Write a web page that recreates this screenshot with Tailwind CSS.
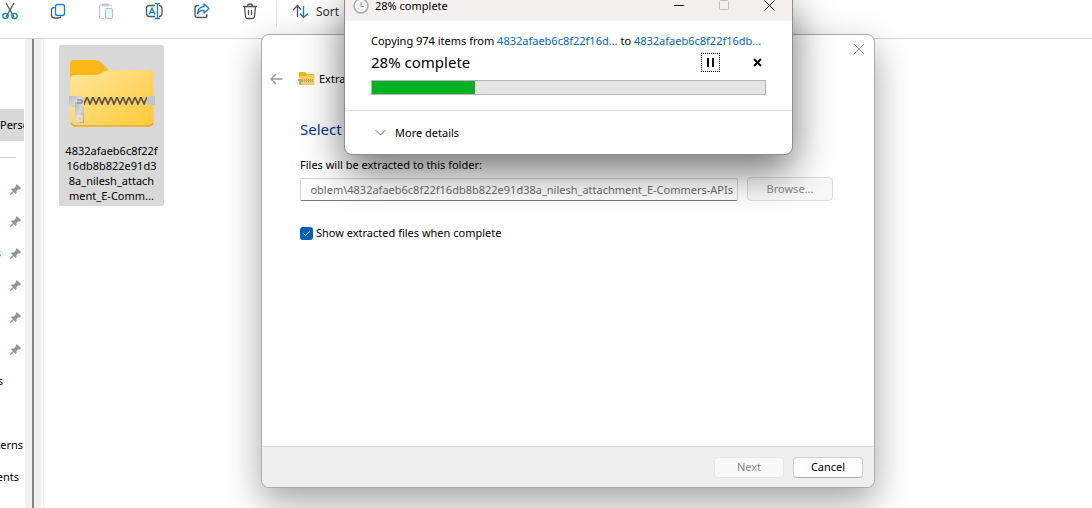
<!DOCTYPE html>
<html lang="en">
<head>
<meta charset="utf-8">
<meta name="viewport" content="width=device-width, initial-scale=1">
<title>Extract files</title>
<script src="https://cdn.jsdelivr.net/npm/@tailwindcss/browser@4"></script>
</head>
<body class="relative flex h-screen flex-col overflow-hidden bg-white font-['Noto_Sans','Open_Sans',sans-serif] text-[11px] leading-4 text-black">

<svg class="absolute size-0" aria-hidden="true">
  <defs>
    <linearGradient id="front" x1="0" y1="0" x2="1" y2="1"><stop offset="0" stop-color="#ffe79b"/><stop offset="1" stop-color="#ffc93a"/></linearGradient>
    <linearGradient id="metal" x1="0" y1="0" x2="1" y2="1"><stop offset="0" stop-color="#b5b5b5"/><stop offset=".5" stop-color="#d9d9d9"/><stop offset="1" stop-color="#a3a3a3"/></linearGradient>
    <pattern id="teeth" width="6" height="8" patternUnits="userSpaceOnUse" y="38"><rect width="6" height="8" fill="#e9cf86"/><path d="M0 0l3 7 3-7" fill="none" stroke="#69501a" stroke-width="1.6"/></pattern>
    <symbol id="pin" viewBox="0 0 12 12"><path d="M7 0l5 4-1 2-2 0-2 2 0 2-1 1-2-2-3 3-1 0 0-1 3-3-2-2 1-1 2 0 2-2z" fill="#8e9aa2"/></symbol>
    <symbol id="zip" viewBox="0 0 86 68">
      <path d="M1 5q0-4 4-4h21q4 0 7 3l7 7h40q5 0 5 5v20H1z" fill="#fbb917"/>
      <path d="M1 21q0-5 5-5h21q4 0 7-3 3-2 6-2h40q5 0 5 5v46q0 5-5 5H6q-5 0-5-5z" fill="url(#front)"/>
      <path d="M2 64q2 3 5 3h72q4 0 5-3" fill="none" stroke="#e7aa20" stroke-width="1.5"/>
      <rect x="14" y="38" width="65" height="8" fill="url(#teeth)"/>
      <rect x="78" y="37" width="8" height="9" fill="#c5c5c5"/>
      <path d="M0 37h12l3 2v7l-3 2H0z" fill="url(#metal)"/>
      <path d="M6 43h9v21H6z" fill="url(#metal)"/><path d="M8 41h5v3H8" fill="none" stroke="#777"/>
      <rect x="9" y="57" width="4" height="5" fill="#f7cf58" stroke="#eee"/>
    </symbol>
  </defs>
</svg>

<header class="flex h-[39px] shrink-0 items-start border-b border-[#d4d4d4]">
  <div class="flex h-[27px] items-end gap-6 border-r border-[#e5e5e5] pr-[14px]">
    <button class="-ml-0.5 h-6" aria-label="Cut"><svg class="size-6" viewBox="0 0 24 24" fill="none"><path d="M8 0l8 14M16 0L8 14" stroke="#555" stroke-width="1.3"/><g stroke="#0f7fd8" stroke-width="1.4"><circle cx="7.500" cy="13" r="2.600"/><circle cx="16.500" cy="13" r="2.600"/></g></svg></button>
    <button class="h-6" aria-label="Copy"><svg class="size-6" viewBox="0 0 24 24" fill="none"><path d="M8.500 4.500Q5.500 4.500 5.500 7v5q0 3 3 3h4q2 0 2.500-1.500" stroke="#555" stroke-width="1.300"/><rect x="9.500" y="1.500" width="9" height="11" rx="2" stroke="#0f7fd8" stroke-width="1.300"/></svg></button>
    <button class="h-6" aria-label="Paste" disabled><svg class="size-6" viewBox="0 0 24 24" fill="none"><path d="M10 15.500H7q-1.500 0-1.500-1.500V3.500Q5.500 2 7 2h9q1.500 0 1.500 1.500M8.500 1h6v2h-6z" stroke="#c8c8c8" stroke-width="1.200"/><rect x="11.500" y="5.500" width="7" height="10" rx="1.500" fill="#f2f9fe" stroke="#9ccdf0" stroke-width="1.200"/></svg></button>
    <button class="h-6" aria-label="Rename"><svg class="size-6" viewBox="0 0 24 24" fill="none"><path d="M13 2.500H7.500q-3 0-3 3v5q0 3 3 3H13M17 2.500q3 0 3 3v5q0 3-3 3" stroke="#555" stroke-width="1.300"/><path d="M7 11.500L10 5l3 6.500M8 9.500h4M15.500.500v15M13 .500h5M13 15.500h5" stroke="#0f7fd8" stroke-width="1.300"/></svg></button>
    <button class="h-6" aria-label="Share"><svg class="size-6" viewBox="0 0 24 24" fill="none"><path d="M9 2.500H7.500q-2.500 0-2.500 2.500v7q0 2.500 2.500 2.500h7q2.500 0 2.500-2.500v-1" stroke="#555" stroke-width="1.300"/><path d="M14 1l5 4.500-5 4.500V7.500q-4-.500-6.500 3Q8 4 14 3.500z" stroke="#0f7fd8" stroke-width="1.300" stroke-linejoin="round"/></svg></button>
    <button class="h-6" aria-label="Delete"><svg class="size-6" viewBox="0 0 24 24" fill="none" stroke="#555" stroke-width="1.300"><path d="M5 3.500h14M9.500 3.500q0-2.500 2.500-2.500t2.500 2.500M6.500 3.500l1 10q.200 2 2 2h5q1.800 0 2-2l1-10M10.500 7v5M13.500 7v5"/></svg></button>
  </div>
  <button class="ml-[15px] flex h-6 items-center gap-[7px] text-[12px] text-[#333]"><svg class="size-[17px]" viewBox="0 0 17 17" fill="none" stroke-width="1.300"><path d="M5.500 13V1.500M1 6l4.500-4.500L9 5.500" stroke="#555"/><path d="M11.500 2v11.500M8 9.500l3.500 4L16 9.500" stroke="#0f7fd8"/></svg>Sort</button>
</header>

<div class="flex min-h-0 flex-1">
  <aside class="flex w-[25px] shrink-0 flex-col overflow-hidden pt-[70px]" aria-label="Navigation">
    <div class="flex h-8 w-6 items-center overflow-hidden bg-[#d9d9d9]">Perso</div>
    <div class="mt-4 mb-[15px] w-4 border-t border-[#d0d0d0]"></div>
    <div class="flex h-8 items-center justify-end pr-1"><svg class="size-[11px]"><use href="#pin"/></svg></div>
    <div class="flex h-8 items-center justify-end pr-1"><svg class="size-[11px]"><use href="#pin"/></svg></div>
    <div class="flex h-8 items-center justify-end gap-[9px] pr-1"><span class="text-[#0f7fd8]">s</span><svg class="size-[11px] shrink-0"><use href="#pin"/></svg></div>
    <div class="flex h-8 items-center justify-end pr-1"><svg class="size-[11px]"><use href="#pin"/></svg></div>
    <div class="flex h-8 items-center justify-end pr-1"><svg class="size-[11px]"><use href="#pin"/></svg></div>
    <div class="flex h-8 items-center justify-end pr-1"><svg class="size-[11px]"><use href="#pin"/></svg></div>
    <div class="flex h-8 items-center justify-end pr-[22px]">s</div>
    <div class="mt-8 flex h-8 items-center justify-end pr-0.5">terns</div>
    <div class="flex h-8 items-center justify-end pr-1.5">ents</div>
  </aside>
  <div class="flex w-4 shrink-0 justify-center bg-[#f0f0f0]"><div class="w-0.5 bg-[#858585]"></div></div>
  <main class="ml-0.5 flex-1 border-l border-[#f0f0f0] pt-1.5 pl-[15px]">
    <figure class="flex h-[161px] w-[105px] flex-col items-center rounded-xs bg-[#d9d9d9] pt-3.5">
      <svg class="h-[68px] w-[86px]"><use href="#zip"/></svg>
      <figcaption class="mt-4 text-center leading-[15px]">4832afaeb6c8f22f<br>16db8b822e91d3<br>8a_nilesh_attach<br>ment_E-Comm...</figcaption>
    </figure>
  </main>
</div>

<section class="absolute top-[34px] left-[261px] flex h-[454px] w-[614px] flex-col rounded-lg border border-[#acacac] bg-white shadow-[0_14px_36px_rgba(0,0,0,0.36)]" role="dialog" aria-label="Extract">
  <div class="flex justify-end pt-2 pr-[9px]"><button class="size-3" aria-label="Close"><svg viewBox="0 0 12 12" stroke="#999"><path d="M1 1l10 10M11 1L1 11"/></svg></button></div>
  <div class="mt-4 flex h-4 items-center pl-2">
    <button aria-label="Back"><svg class="h-3 w-[13px]" viewBox="0 0 13 12" fill="none" stroke="#999" stroke-width="1.300"><path d="M12.500 6H1M6 1L1 6l5 5"/></svg></button>
    <svg class="ml-[15px] h-[14px] w-[17px]" viewBox="0 0 17 14"><path d="M1 1q0-1 1-1h5l2 2h7v9H1z" fill="#f5b21a"/><path d="M1 4h6l2-1h7.500v9q0 1-1 1H2q-1 0-1-1z" fill="#ffd45c"/><path d="M4 8.500h11" stroke="#8c8068" stroke-width="2" stroke-dasharray="1 1"/><path d="M4 8.500h11" stroke="#b9b2a2"/><path d="M0 8h4M2.500 8v5" stroke="#a5a5a5" stroke-width="2"/></svg>
    <span class="ml-1">Extra</span>
  </div>
  <div class="flex flex-1 flex-col pr-[41px] pl-[38px]">
    <h1 class="mt-8 text-[15px] leading-5 text-[#003399]">Select</h1>
    <label for="dest" class="mt-[18px]">Files will be extracted to this folder:</label>
    <div class="mt-1 flex items-center gap-[9px]">
      <input id="dest" readonly class="h-[23px] min-w-0 flex-1 rounded-xs border border-x-[#d5d5d5] border-t-[#d5d5d5] border-b-[#777] bg-transparent px-1 text-right text-[#6d6d6d]" value="oblem\4832afaeb6c8f22f16db8b822e91d38a_nilesh_attachment_E-Commers-APIs">
      <button disabled class="h-6 w-[86px] rounded-sm border border-[#dedede] bg-[#f9f9f9] text-[#888]">Browse...</button>
    </div>
    <label class="mt-6 flex items-center gap-[3px]"><span class="relative flex size-[13px]"><input type="checkbox" checked class="size-[13px] appearance-none rounded-[3px] bg-[#005fb8]"><svg class="pointer-events-none absolute inset-0 size-[13px]" viewBox="0 0 13 13" fill="none" stroke="#fff"><path d="M3.500 6.500l2 2 4-4"/></svg></span>Show extracted files when complete</label>
  </div>
  <footer class="flex h-[41px] items-center justify-end gap-[9px] rounded-b-lg border-t border-[#dcdcdc] bg-[#efefef] pr-[11px]">
    <button disabled class="h-[21px] w-[70px] rounded-sm border border-[#e7e7e7] bg-[#f8f8f8] text-[#888]">Next</button>
    <button class="h-[21px] w-[70px] rounded-sm border border-[#d0d0d0] border-b-[#b0b0b0] bg-[#fdfdfd]">Cancel</button>
  </footer>
</section>

<section class="absolute -top-[9px] left-[344px] flex h-[164px] w-[449px] flex-col rounded-lg border border-[#8d8d8d] bg-white shadow-[0_16px_40px_rgba(0,0,0,0.56)]" role="dialog" aria-label="Copy progress">
  <div class="flex h-[29px] items-center rounded-t-lg bg-[#f5f0f0] pr-[17px] pb-0.5 pl-2">
    <svg class="size-4" viewBox="0 0 16 16" fill="none"><circle cx="8" cy="8" r="7" fill="#f5f5f5" stroke="#aaa" stroke-width="1.500"/><path d="M8 4v4.500h3" stroke="#999"/></svg>
    <span class="ml-1.5 flex-1">28% complete</span>
    <div class="flex items-center gap-[34px]">
      <button aria-label="Minimize"><svg class="size-[11px]" viewBox="0 0 11 11" stroke="#000"><path d="M0 5.500h10"/></svg></button>
      <button disabled aria-label="Maximize"><svg class="size-[11px]" viewBox="0 0 11 11" fill="none" stroke="#bfbfbf"><rect x=".5" y=".5" width="9" height="9" rx="1"/></svg></button>
      <button aria-label="Close"><svg class="size-[11px]" viewBox="0 0 11 11" stroke="#000"><path d="M.5.500l10 10M10.500.500l-10 10"/></svg></button>
    </div>
  </div>
  <div class="flex flex-1 flex-col px-[26px] pt-3">
    <p class="whitespace-nowrap">Copying 974 items from <a href="#" class="text-[#0066cc]">4832afaeb6c8f22f16d...</a> to <a href="#" class="text-[#0066cc]">4832afaeb6c8f22f16db...</a></p>
    <div class="mt-[3px] flex h-5 items-center">
      <h2 class="flex-1 text-[15px] leading-5">28% complete</h2>
      <button class="flex size-[19px] items-center justify-center border border-dotted border-black" aria-label="Pause"><svg class="size-[9px]" viewBox="0 0 9 9"><path d="M1 0h2v9H1zM6 0h2v9H6z"/></svg></button>
      <button class="mr-1 ml-[33px] size-[9px]" aria-label="Cancel copy"><svg viewBox="0 0 9 9" stroke="#000" stroke-width="2"><path d="M1 1l7 7M8 1L1 8"/></svg></button>
    </div>
    <div class="mt-2 h-[15px] border border-[#b5b5b5] bg-[#e5e5e5]" role="progressbar" aria-label="Copy progress" aria-valuenow="28"><div class="h-full w-[103px] bg-[#06b025]"></div></div>
  </div>
  <div class="flex h-[44px] items-center border-t border-[#dfdfdf] pl-[30px]">
    <button class="flex items-center gap-[9px]"><svg class="h-[7px] w-[11px]" viewBox="0 0 11 7" fill="none" stroke="#777"><path d="M.5 1l5 5 5-5"/></svg>More details</button>
  </div>
</section>
</body>
</html>
